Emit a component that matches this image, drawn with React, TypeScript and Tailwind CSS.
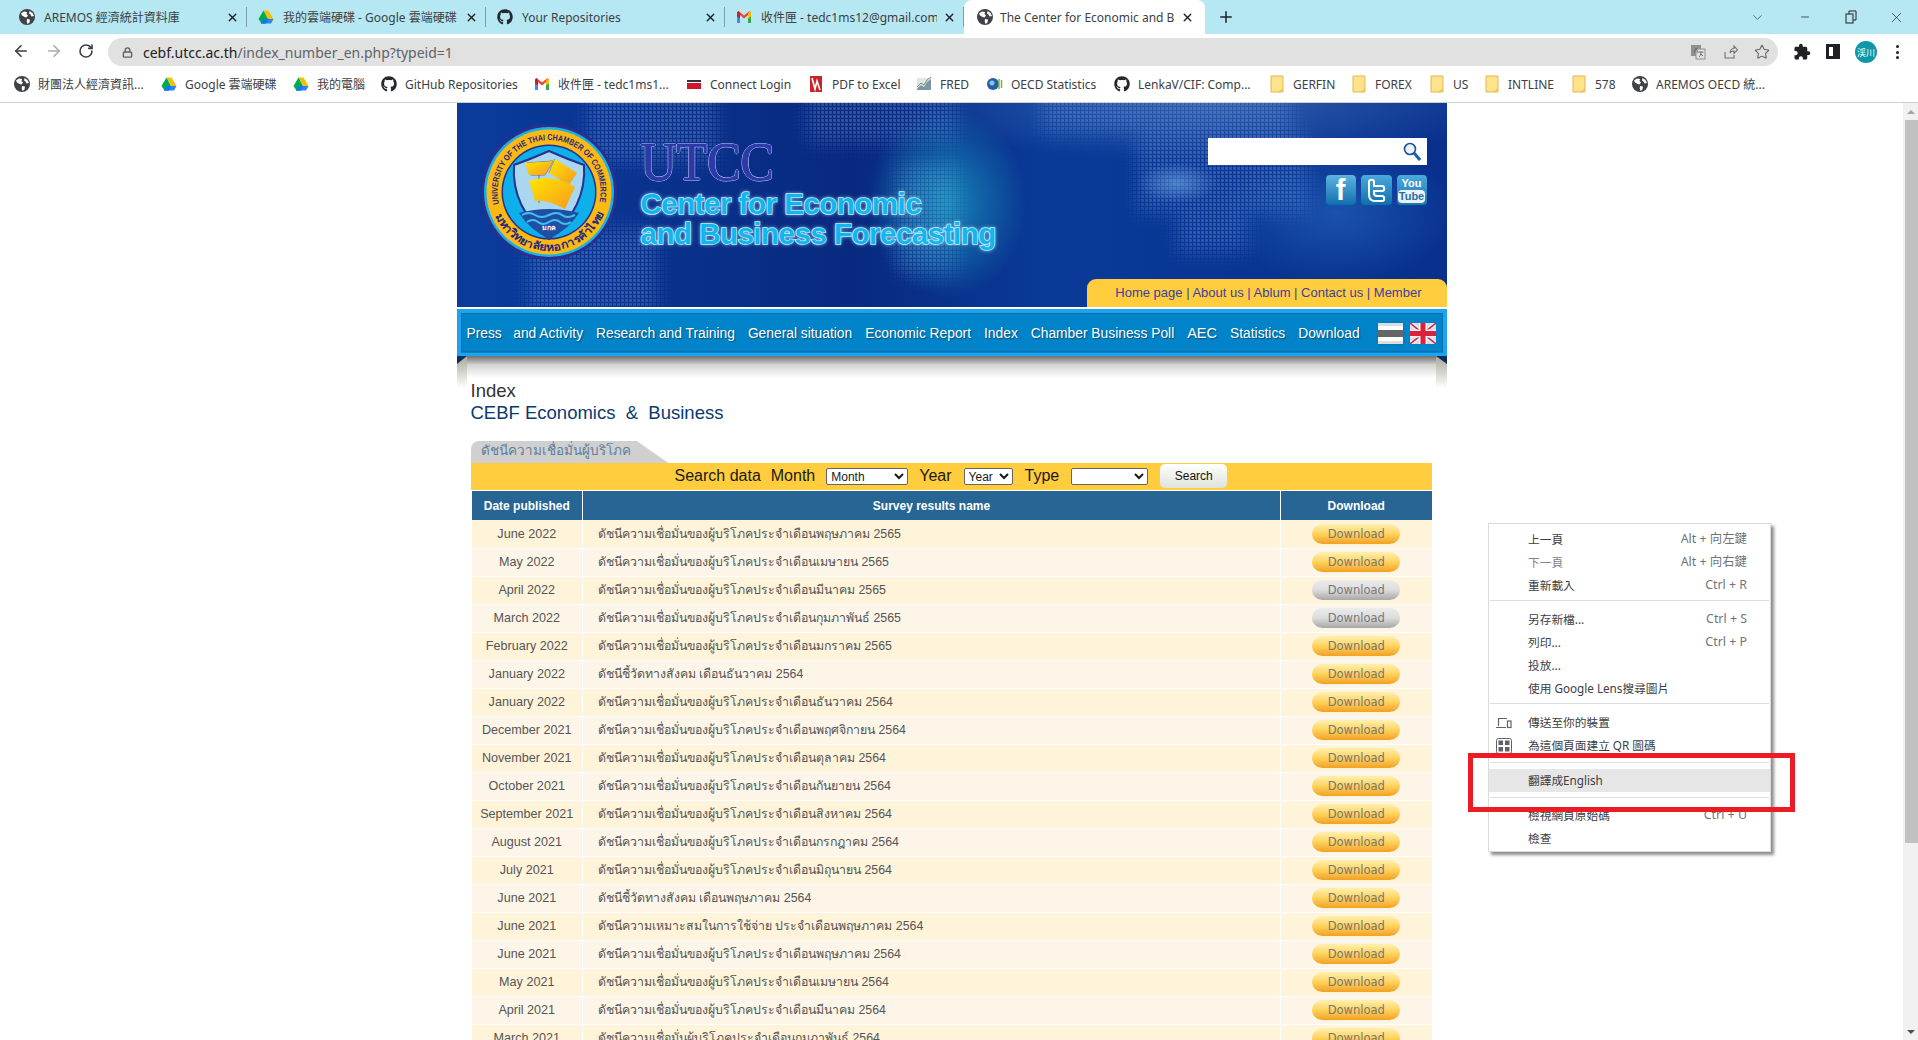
import type { ReactNode } from 'react';
import { ArrowLeft, ArrowRight, ChevronDown, Lock, Minus, Plus, RotateCw, Star, X } from 'lucide-react';
import { FaGithub } from 'react-icons/fa';
import { MdExtension } from 'react-icons/md';

const CHROME_FONT = "font-['Noto_Sans','Noto_Sans_CJK_TC',sans-serif]";

function Globe({ size = 16 }: { size?: number }) {
  return (
    <svg width={size} height={size} viewBox="0 0 16 16" className="shrink-0">
      <circle cx="8" cy="8" r="8" fill="#3f4347" />
      <path d="M2 4.5 5 2.5 8 3 7.5 5 9 6.5 7.5 8.5 5.5 8 3 6.5ZM8 10l3 .5-.5 3-2 1.5-.8-2.5ZM10.500 2l3 2 1.500 3-2.500.5-1-2-1.500-1Z" fill="#fff" />
    </svg>
  );
}

function Drive() {
  return (
    <svg width="16" height="16" viewBox="0 0 16 16" className="shrink-0">
      <path d="M5.500 1.500h5L15.500 10h-5Z" fill="#fbbc04" />
      <path d="M5.500 1.500 10 10l-2.500 4.500h-4L.5 10Z" fill="#00ac47" />
      <path d="M5.300 10h10.200l-2.500 4.500H2.800Z" fill="#2684fc" />
      <path d="M5.300 10h5.200l-2.500 4.500H2.800Z" fill="#1a73e8" />
    </svg>
  );
}

function Gmail() {
  return (
    <svg width="16" height="16" viewBox="0 0 16 16" className="shrink-0">
      <path d="M1 3.500V14h3V7.500Z" fill="#4285f4" />
      <path d="M15 3.500V14h-3V7.500Z" fill="#34a853" />
      <path d="M1 3.500 2.500 2 8 6.500 13.500 2 15 3.500 8 9.500Z" fill="#ea4335" />
      <path d="M12 4.500 13.500 2 15 3.500V7.500L12 9.500Z" fill="#fbbc04" />
      <path d="M1 3.500 2.500 2 4 4.200V9.500L1 7.500Z" fill="#c5221f" />
    </svg>
  );
}

function Github() {
  return <FaGithub size={16} className="shrink-0 text-[#24292e]" />;
}

function FolderIcon() {
  return (
    <svg width="14" height="18" viewBox="0 0 14 18" className="shrink-0">
      <path d="M1 1h12v16H1Z" fill="#ffe28c" stroke="#e0b94e" />
      <path d="M9 17l4-3" stroke="#e0b94e" fill="none" />
    </svg>
  );
}

function ConnectIcon() {
  return (
    <svg width="16" height="16" viewBox="0 0 16 16" className="shrink-0">
      <rect x="1" y="4" width="14" height="2" fill="#333" />
      <rect x="1" y="7" width="14" height="6" fill="#d2142b" />
    </svg>
  );
}

function PdfIcon() {
  return (
    <svg width="14" height="18" viewBox="0 0 14 18" className="shrink-0">
      <rect x="1" y="1" width="12" height="16" fill="#c8242b" />
      <path d="M3 3l3 11 2-8 3 9" stroke="#fff" strokeWidth="1.600" fill="none" />
    </svg>
  );
}

function FredIcon() {
  return (
    <svg width="16" height="16" viewBox="0 0 16 16" className="shrink-0">
      <rect x="1" y="2" width="14" height="12" fill="#dfe6ea" />
      <path d="M1 13 5 9l3 2 3-5 4-3v11H1Z" fill="#7d95a8" />
      <path d="M1 11l4-4 3 2 3-5 4-3" stroke="#6b9b4a" fill="none" />
    </svg>
  );
}

function OecdIcon() {
  return (
    <svg width="16" height="16" viewBox="0 0 16 16" className="shrink-0">
      <circle cx="6" cy="8" r="6" fill="#1f5fa8" />
      <circle cx="5" cy="7" r="2.500" fill="#8fc0e8" />
      <path d="M12 3v10M14.500 4v8" stroke="#7fb23e" strokeWidth="1.500" />
    </svg>
  );
}

const tabs = [
  { title: 'AREMOS 經濟統計資料庫', icon: <Globe /> },
  { title: '我的雲端硬碟 - Google 雲端硬碟', icon: <Drive /> },
  { title: 'Your Repositories', icon: <Github /> },
  { title: '收件匣 - tedc1ms12@gmail.com', icon: <Gmail /> },
];

const bookmarks = [
  { label: '財團法人經濟資訊...', icon: <Globe />, width: 'w-[107px]' },
  { label: 'Google 雲端硬碟', icon: <Drive />, width: 'w-[92px]' },
  { label: '我的電腦', icon: <Drive />, width: 'w-[48px]' },
  { label: 'GitHub Repositories', icon: <Github />, width: 'w-[113px]' },
  { label: '收件匣 - tedc1ms1...', icon: <Gmail />, width: 'w-[112px]' },
  { label: 'Connect Login', icon: <ConnectIcon />, width: 'w-[82px]' },
  { label: 'PDF to Excel', icon: <PdfIcon />, width: 'w-[68px]' },
  { label: 'FRED', icon: <FredIcon />, width: 'w-[31px]' },
  { label: 'OECD Statistics', icon: <OecdIcon />, width: 'w-[87px]' },
  { label: 'LenkaV/CIF: Comp...', icon: <Github />, width: 'w-[115px]' },
  { label: 'GERFIN', icon: <FolderIcon />, width: 'w-[42px]' },
  { label: 'FOREX', icon: <FolderIcon />, width: 'w-[38px]' },
  { label: 'US', icon: <FolderIcon />, width: 'w-[15px]' },
  { label: 'INTLINE', icon: <FolderIcon />, width: 'w-[47px]' },
  { label: '578', icon: <FolderIcon />, width: 'w-[21px]' },
  { label: 'AREMOS OECD 統...', icon: <Globe />, width: 'w-[114px]' },
];

function TabStrip() {
  return (
    <div className={`flex h-[34px] items-center bg-[#b6e8f3] pl-2 text-xs text-[#3c4043] ${CHROME_FONT}`}>
      {tabs.map((tab) => (
        <div key={tab.title} className="flex h-[34px] w-[239px] items-center pl-[11px]">
          {tab.icon}
          <span className="ml-[9px] w-[176px] overflow-hidden whitespace-nowrap pt-[2px]">{tab.title}</span>
          <X size={13} strokeWidth={2.5} className="ml-[6px] shrink-0 text-[#202124]" />
          <span className="ml-[7px] h-[20px] w-px shrink-0 bg-[#7f9ea5]" />
        </div>
      ))}
      <div className="flex h-[34px] w-[241px] items-center rounded-t-lg bg-white pl-[13px]">
        <Globe />
        <span className="ml-[7px] w-[174px] overflow-hidden whitespace-nowrap pt-[2px]">The Center for Economic and Business</span>
        <X size={13} strokeWidth={2.5} className="ml-[7px] shrink-0 text-[#202124]" />
      </div>
      <Plus size={18} strokeWidth={2} className="ml-[12px] text-[#202124]" />
      <ChevronDown size={15} strokeWidth={1.2} className="ml-[515px] text-[#3c4043]" />
      <Minus size={12} strokeWidth={1.5} className="ml-[34px] text-[#202124]" />
      <svg width="12" height="14" viewBox="0 0 12 14" className="ml-[34px]" fill="none" stroke="#202124">
        <rect x="1" y="4" width="7" height="9" />
        <path d="M4 4V1h7v9H8" />
      </svg>
      <X size={17} strokeWidth={1} className="ml-[31px] text-[#202124]" />
    </div>
  );
}

function Toolbar() {
  return (
    <div className={`flex h-[32px] items-start bg-white ${CHROME_FONT}`}>
      <ArrowLeft size={18} strokeWidth={2.2} className="ml-[12px] mt-[8px] text-[#3c4043]" />
      <ArrowRight size={18} strokeWidth={2.2} className="ml-[15px] mt-[8px] text-[#a9abae]" />
      <RotateCw size={16} strokeWidth={2.4} className="ml-[15px] mt-[9px] text-[#3c4043]" />
      <div className="ml-[14px] mt-1 flex h-7 w-[1670px] items-center rounded-full bg-[#e1e1e1] pl-[14px] text-[14px]">
        <Lock size={11} strokeWidth={3} className="text-[#5f6368]" />
        <span className="ml-[10px] whitespace-nowrap text-[#202124]">cebf.utcc.ac.th</span>
        <span className="whitespace-nowrap text-[#5f6368]">/index_number_en.php?typeid=1</span>
        <svg width="16" height="16" viewBox="0 0 16 16" className="ml-auto">
          <rect x="1" y="1" width="10" height="11" fill="#8d9093" />
          <rect x="6" y="5" width="9" height="10" fill="#e1e1e1" stroke="#8d9093" />
          <path d="M4 9l2-5 2 5M8.500 8h5M11 8c0 3-1 4-2 5M11 10l2 2" stroke="#6b6e71" fill="none" />
        </svg>
        <svg width="16" height="16" viewBox="0 0 16 16" className="ml-4" fill="none" stroke="#6f7275" strokeWidth="1.100">
          <path d="M3 8v6h9v-3M8 9c0-3 2-4.500 4-4.500V2l3.500 4L12 9.500V7C10 7 8.500 7.500 8 9Z" />
        </svg>
        <Star size={16} strokeWidth={1.6} className="ml-4 mr-2 text-[#5f6368]" />
      </div>
      <MdExtension size={18} className="ml-[15px] mt-[9px] text-[#202124]" />
      <span className="ml-[15px] mt-[10px] h-[15px] w-[14px] border-[3px] border-r-[7px] border-[#202124]" />
      <span className="ml-[15px] mt-[7px] flex h-[22px] w-[22px] items-center justify-center rounded-full bg-[#0d97a8] text-[9px] leading-none text-white">
        渓川
      </span>
      <span className="ml-[19px] mt-[11px] flex h-[14px] flex-col justify-between">
        <span className="h-[3px] w-[3px] rounded-full bg-[#202124]" />
        <span className="h-[3px] w-[3px] rounded-full bg-[#202124]" />
        <span className="h-[3px] w-[3px] rounded-full bg-[#202124]" />
      </span>
    </div>
  );
}

function BookmarkBar() {
  return (
    <div className={`flex h-[37px] items-center gap-4 border-b border-[#cfcfcf] bg-white pl-[14px] text-xs text-[#3c4043] ${CHROME_FONT}`}>
      {bookmarks.map((item) => (
        <div key={item.label} className="flex items-center">
          <span className="flex w-4 justify-center">{item.icon}</span>
          <span className={`ml-2 whitespace-nowrap pt-[2px] ${item.width}`}>{item.label}</span>
        </div>
      ))}
    </div>
  );
}

function Seal() {
  return (
    <svg width="136" height="138" viewBox="0 0 136 138" className="absolute left-[24px] top-[20px]">
      <defs>
        <path id="sealTop" d="M18 81A51.500 51.500 0 1 1 118 81" />
        <path id="sealBottom" d="M13 90A59 59 0 0 0 123 90" />
        <linearGradient id="sail" x1="0" x2="1" y1="0" y2="1">
          <stop offset="0" stopColor="#ffe600" />
          <stop offset="1" stopColor="#f79a1e" />
        </linearGradient>
      </defs>
      <circle cx="68" cy="69" r="68" fill="#2d2f8c" />
      <circle cx="68" cy="69" r="65" fill="#12b2ec" />
      <circle cx="68" cy="69" r="62.500" fill="#fdb913" />
      <circle cx="68" cy="69" r="47.500" fill="#2d2f8c" />
      <circle cx="68" cy="69" r="46" fill="#0db0ea" />
      <text fill="#27297f" fontSize="8.500" fontWeight="700" fontFamily="Liberation Sans, sans-serif">
        <textPath href="#sealTop" textLength="184" lengthAdjust="spacingAndGlyphs">UNIVERSITY OF THE THAI CHAMBER OF COMMERCE</textPath>
      </text>
      <text fill="#27297f" fontSize="11" fontWeight="700" fontFamily="Noto Sans, sans-serif">
        <textPath href="#sealBottom" textLength="138" lengthAdjust="spacingAndGlyphs" startOffset="2%">มหาวิทยาลัยหอการค้าไทย</textPath>
      </text>
      <path d="M33 42Q50 36 68 28 86 36 103 42 106 84 68 116 30 84 33 42Z" fill="#a9d7f0" stroke="#2d2f8c" strokeWidth="2" />
      <path d="M46 40 72 38 64 52 50 52M68 50 74 36M58 50v30M80 44v34" stroke="#5f6f9f" fill="none" />
      <path d="M44 40 72 38 64 52 48 52Z" fill="url(#sail)" />
      <path d="M68 50 74 36 96 50 88 62Z" fill="url(#sail)" />
      <path d="M48 58Q70 50 94 64L84 86Q66 76 54 78Z" fill="url(#sail)" />
      <path d="M38 90Q68 82 98 90 88 106 68 116 48 106 38 90Z" fill="#1f4ea3" />
      <path d="M41 92q7-4 13 0t14 0 13 0 13 0M46 99q6-4 11 0t11 0 11 0 11 0" stroke="#3ec2ef" strokeWidth="2" fill="none" />
      <text x="68" y="107" textAnchor="middle" fill="#fff" fontSize="7" fontWeight="700" fontFamily="Noto Sans, sans-serif">มกค</text>
    </svg>
  );
}

function WorldDots() {
  return (
    <svg width="990" height="204" className="absolute left-0 top-0">
      <defs>
        <pattern id="dots" width="4" height="4" patternUnits="userSpaceOnUse">
          <rect width="3" height="3" fill="#7fa6e2" fillOpacity="0.32" />
        </pattern>
        <filter id="soft">
          <feGaussianBlur stdDeviation="9" />
        </filter>
        <mask id="land">
          <g fill="#fff" filter="url(#soft)">
            <rect x="130" y="-10" width="130" height="70" />
            <rect x="70" y="125" width="130" height="85" />
            <rect x="350" y="-10" width="150" height="50" />
            <rect x="585" y="-10" width="250" height="40" />
            <rect x="680" y="30" width="170" height="80" />
            <rect x="720" y="110" width="70" height="40" />
            <rect x="440" y="60" width="60" height="110" />
          </g>
        </mask>
      </defs>
      <rect width="990" height="204" fill="url(#dots)" mask="url(#land)" />
    </svg>
  );
}

function Header() {
  return (
    <div className="relative h-[204px] overflow-hidden bg-[radial-gradient(ellipse_80px_95px_at_490px_100px,#1686b8,transparent),radial-gradient(ellipse_40px_20px_at_720px_80px,#4478c4,transparent),radial-gradient(ellipse_120px_70px_at_880px_110px,#1a52ad,transparent),radial-gradient(ellipse_300px_60px_at_750px_0px,#2f5eae,transparent),linear-gradient(90deg,#0a3b9c_0%,#08297f_40%,#0a3a98_60%,#08308c_100%)]">
      <WorldDots />
      <Seal />
      <div className="relative pl-[184px] pt-[31px]">
        <div className="origin-top scale-y-110 text-[50px] leading-[50px] text-[#2c3aa8] font-['Liberation_Serif',serif] [-webkit-text-stroke:1px_#2c3aa8] [text-shadow:1px_0_0_#c3cefa,-1px_0_0_#c3cefa,0_1px_0_#c3cefa,0_-1px_0_#c3cefa]">UTCC</div>
        <div className="mt-[5px] text-[29.500px] font-bold leading-[30px] tracking-[-0.5px] text-[#13b5ee] [-webkit-text-stroke:1.500px_#bfeeff] [paint-order:stroke_fill] [text-shadow:0_0_4px_#bfefff]">
          Center for Economic
          <br />
          and Business Forecasting
        </div>
      </div>
      <div className="absolute right-5 top-[35px] flex h-[27px] w-[219px] items-center justify-end bg-white pr-[6px]">
        <svg width="18" height="19" viewBox="0 0 18 19" fill="none">
          <circle cx="7" cy="7" r="5.500" stroke="#1e4f8c" strokeWidth="1.600" fill="#e8f4fc" />
          <path d="M11 11l6 7" stroke="#1763a8" strokeWidth="3" />
        </svg>
      </div>
      <div className="absolute right-5 top-[72px] flex gap-[5px]">
        <span className="flex h-[30px] w-[30px] items-center justify-center rounded bg-gradient-to-b from-[#5cb4e0] to-[#0b6fae] text-[29px] font-bold leading-[30px] text-white">f</span>
        <span className="flex h-[30px] w-[31px] items-center justify-center rounded bg-gradient-to-b from-[#4ba9dc] to-[#0b6fae]">
          <svg width="30" height="30" viewBox="0 0 30 30" fill="none" stroke="#fff" strokeWidth="2">
            <path d="M8 7c0-3 5-3 5 0v4h8c3 0 3 5 0 5h-8v2c0 2 1 3 3 3h5c3 0 3 5 0 5h-7c-4 0-6-3-6-7Z" />
          </svg>
        </span>
        <span className="flex h-[30px] w-[30px] flex-col items-center justify-center rounded bg-gradient-to-b from-[#4ba9dc] to-[#1a76b4] text-[11px] font-bold leading-[13px] text-white">
          <span>You</span>
          <span className="rounded-sm bg-white/90 px-px text-[#2a6ea5]">Tube</span>
        </span>
      </div>
      <div className="absolute bottom-0 right-0 flex h-7 w-[360px] items-center justify-end rounded-t-[9px] bg-[#ffcd3e] pr-[25px] text-[13px] text-[#3d3f9f]">
        Home page | About us | Ablum | Contact us | Member
      </div>
    </div>
  );
}

const navItems = ['Press   and Activity', 'Research and Training', 'General situation', 'Economic Report', 'Index', 'Chamber Business Poll', 'AEC', 'Statistics', 'Download'];

function Nav() {
  return (
    <div className="mt-[2px] flex h-[47px] items-center gap-[13px] border-[4px] border-b-[3px] border-[#1ea4ee] bg-[#0083c8] pl-[6px] text-[13.800px] text-white outline outline-[1px] -outline-offset-[5px] outline-[#0a6fb0] [text-shadow:1px_1px_1px_rgba(0,0,0,0.4)]">
      {navItems.map((item) => (
        <span key={item} className={`whitespace-pre pt-[2px] ${item === 'AEC' ? 'text-[14.500px]' : ''}`}>{item}</span>
      ))}
      <span className="ml-[5px] flex h-[21px] w-[25px] flex-col shadow-sm">
        <span className="h-[3px] bg-[#ddd]" />
        <span className="h-[4px] bg-white" />
        <span className="h-[7px] bg-[#666]" />
        <span className="h-[4px] bg-white" />
        <span className="h-[3px] bg-[#ddd]" />
      </span>
      <svg width="26" height="21" viewBox="0 0 26 21" className="-ml-[6px]">
        <rect width="26" height="21" fill="#d6d8e8" />
        <path d="M0 0 26 21M26 0 0 21" stroke="#e8e8f0" strokeWidth="5" />
        <path d="M0 0 26 21M26 0 0 21" stroke="#d8233f" strokeWidth="1.500" />
        <path d="M13 0v21M0 10.500h26" stroke="#f2f2f2" strokeWidth="8" />
        <path d="M13 0v21M0 10.500h26" stroke="#d8233f" strokeWidth="5" />
      </svg>
    </div>
  );
}

function NavShadow() {
  return (
    <div className="absolute inset-x-0 top-0 flex h-[32px]">
      <div className="relative w-[10px] bg-gradient-to-b from-[#a9a99c] to-white">
        <span className="absolute left-0 top-0 border-r-[10px] border-t-[8px] border-r-transparent border-t-[#0e2c5c]" />
      </div>
      <div className="h-[22px] flex-1 bg-gradient-to-b from-[#6f6f6f] via-[#d4d4d4] via-40% to-white" />
      <div className="relative w-[11px] bg-gradient-to-b from-[#a9a99c] to-white">
        <span className="absolute right-0 top-0 border-l-[11px] border-t-[8px] border-l-transparent border-t-[#0e2c5c]" />
      </div>
    </div>
  );
}

const THAI_BASE = 'ดัชนีความเชื่อมั่นของผู้บริโภคประจำเดือน';

const rows = [
  { date: 'June 2022', name: `${THAI_BASE}พฤษภาคม 2565` },
  { date: 'May 2022', name: `${THAI_BASE}เมษายน 2565` },
  { date: 'April 2022', name: `${THAI_BASE}มีนาคม 2565`, off: true },
  { date: 'March 2022', name: `${THAI_BASE}กุมภาพันธ์ 2565`, off: true },
  { date: 'February 2022', name: `${THAI_BASE}มกราคม 2565` },
  { date: 'January 2022', name: 'ดัชนีชี้วัดทางสังคม เดือนธันวาคม 2564' },
  { date: 'January 2022', name: `${THAI_BASE}ธันวาคม 2564` },
  { date: 'December 2021', name: `${THAI_BASE}พฤศจิกายน 2564` },
  { date: 'November 2021', name: `${THAI_BASE}ตุลาคม 2564` },
  { date: 'October 2021', name: `${THAI_BASE}กันยายน 2564` },
  { date: 'September 2021', name: `${THAI_BASE}สิงหาคม 2564` },
  { date: 'August 2021', name: `${THAI_BASE}กรกฎาคม 2564` },
  { date: 'July 2021', name: `${THAI_BASE}มิถุนายน 2564` },
  { date: 'June 2021', name: 'ดัชนีชี้วัดทางสังคม เดือนพฤษภาคม 2564' },
  { date: 'June 2021', name: 'ดัชนีความเหมาะสมในการใช้จ่าย ประจำเดือนพฤษภาคม 2564' },
  { date: 'June 2021', name: `${THAI_BASE}พฤษภาคม 2564` },
  { date: 'May 2021', name: `${THAI_BASE}เมษายน 2564` },
  { date: 'April 2021', name: `${THAI_BASE}มีนาคม 2564` },
  { date: 'March 2021', name: 'ดัชนีความเชื่อมั่นผู้บริโภคประจำเดือนกุมภาพันธ์ 2564' },
];

function SearchBar() {
  return (
    <div className="flex h-[27px] items-center bg-[#ffcd3e] pb-px pl-[204px] text-[16px] text-[#1a1a1a]">
      <span className="whitespace-pre">Search data</span>
      <span className="ml-[10px]">Month</span>
      <select defaultValue="Month" className="ml-[11px] h-[17px] w-[82px] rounded-[2px] border border-[#666] bg-white text-[12px]">
        <option>Month</option>
      </select>
      <span className="ml-[11px]">Year</span>
      <select defaultValue="Year" className="ml-[12px] h-[17px] w-[49px] rounded-[2px] border border-[#666] bg-white text-[12px]">
        <option>Year</option>
      </select>
      <span className="ml-[12px]">Type</span>
      <select className="ml-[12px] h-[17px] w-[77px] rounded-[2px] border border-[#666] bg-white text-[12px]">
        <option></option>
      </select>
      <button className="ml-[12px] h-6 w-[67px] rounded-[5px] bg-gradient-to-b from-white to-[#dfe3da] text-[12px] text-[#111]">Search</button>
    </div>
  );
}

function DataTable() {
  return (
    <table className="ml-px mt-px w-[960px] table-fixed border-collapse text-[#555]">
      <thead>
        <tr className="h-[29px] bg-[#266594] text-[12px] font-bold text-white">
          <th className="w-[111px] border-r border-white">Date published</th>
          <th className="w-[698px] border-r border-white">Survey results name</th>
          <th>Download</th>
        </tr>
      </thead>
      <tbody>
        {rows.map((row, index) => (
          <tr key={row.name} className={`h-[28px] border-b border-white ${index % 2 === 0 ? 'bg-[#fff3d9]' : 'bg-[#fdf5e7]'}`}>
            <td className="border-r border-white pt-px text-center text-[12.600px]">{row.date}</td>
            <td className="border-r border-white pl-[15px] pt-px text-[12.350px]">{row.name}</td>
            <td>
              <span
                className={`mx-auto block h-5 w-[88px] rounded-full text-center font-['DejaVu_Sans',sans-serif] text-[11.500px] leading-5 text-[#777] ${
                  row.off ? 'bg-gradient-to-b from-[#ececec] via-[#dcdcdc] to-[#a8a8a8]' : 'bg-gradient-to-b from-[#fff0b0] via-[#fdd35a] to-[#f2a021]'
                }`}
              >
                Download
              </span>
            </td>
          </tr>
        ))}
      </tbody>
    </table>
  );
}

function Scrollbar() {
  return (
    <div className="flex w-[15px] shrink-0 flex-col items-end bg-[#f1f1f1]">
      <div className="flex h-[17px] w-full items-center justify-center">
        <span className="border-x-[4px] border-b-[4px] border-x-transparent border-b-[#a3a3a3]" />
      </div>
      <div className="h-[723px] w-[13px] bg-[#c1c1c1]" />
      <div className="mt-auto flex h-[17px] w-full items-center justify-center">
        <span className="border-x-[4px] border-t-[4px] border-x-transparent border-t-[#505050]" />
      </div>
    </div>
  );
}

function MenuItem({ label, hint, muted, icon }: { label: string; hint?: string; muted?: boolean; icon?: ReactNode }) {
  return (
    <div className={`relative flex h-[23px] items-center justify-between pl-[39px] pr-[23px] ${muted ? 'text-[#80868b]' : 'text-[#3c4043]'}`}>
      {icon && <span className="absolute left-[7px]">{icon}</span>}
      <span>{label}</span>
      {hint && <span className="text-[12.400px] text-[#70757a]">{hint}</span>}
    </div>
  );
}

function MenuRule({ className }: { className: string }) {
  return <div className={`mx-px h-px bg-[#dcdcdc] ${className}`} />;
}

function ContextMenu() {
  return (
    <div className={`absolute left-[1488px] top-[523px] h-[329px] w-[283px] border border-[#dadada] bg-white pt-[4px] text-[11.700px] shadow-[3px_3px_3px_rgba(0,0,0,0.45)] ${CHROME_FONT}`}>
      <MenuItem label="上一頁" hint="Alt + 向左鍵" />
      <MenuItem label="下一頁" hint="Alt + 向右鍵" muted />
      <MenuItem label="重新載入" hint="Ctrl + R" />
      <MenuRule className="mb-[7px] mt-[3px]" />
      <MenuItem label="另存新檔..." hint="Ctrl + S" />
      <MenuItem label="列印..." hint="Ctrl + P" />
      <MenuItem label="投放..." />
      <MenuItem label="使用 Google Lens搜尋圖片" />
      <MenuRule className="mb-[7px] mt-[3px]" />
      <MenuItem
        label="傳送至你的裝置"
        icon={
          <svg width="16" height="12" viewBox="0 0 16 12" fill="none" stroke="#5f6368" strokeWidth="1.200">
            <path d="M2.500 9V1.500H11M0 10.500h10" />
            <rect x="11.500" y="4" width="3.500" height="6.500" />
          </svg>
        }
      />
      <MenuItem
        label="為這個頁面建立 QR 圖碼"
        icon={
          <svg width="16" height="16" viewBox="0 0 16 16">
            <rect x="0.500" y="0.500" width="15" height="15" rx="2" fill="none" stroke="#5f6368" />
            <rect x="2.500" y="2.500" width="4.500" height="4.500" fill="#5f6368" />
            <rect x="9" y="2.500" width="4.500" height="4.500" fill="#5f6368" />
            <rect x="2.500" y="9" width="4.500" height="4.500" fill="#5f6368" />
            <rect x="9" y="9" width="4.500" height="4.500" fill="#5f6368" />
          </svg>
        }
      />
      <MenuRule className="mb-[6px] mt-[5px]" />
      <div className="flex h-[23px] items-center bg-[#e6e6e6] pl-[39px] text-[#3c4043]">翻譯成English</div>
      <MenuRule className="mb-[6px] mt-[5px]" />
      <MenuItem label="檢視網頁原始碼" hint="Ctrl + U" />
      <MenuItem label="檢查" />
    </div>
  );
}

export default function App() {
  return (
    <div className="relative flex h-[1040px] flex-col overflow-hidden bg-white font-['Liberation_Sans',sans-serif]">
      <TabStrip />
      <Toolbar />
      <BookmarkBar />
      <div className="flex min-h-0 flex-1">
        <div className="min-w-0 flex-1 overflow-hidden">
          <div className="mx-auto w-[990px]">
            <Header />
            <Nav />
            <div className="relative">
              <NavShadow />
              <div className="relative ml-[14px] w-[961px] pt-6">
                <h1 className="text-[18.500px] leading-[22px] text-[#333]">Index</h1>
                <h2 className="whitespace-pre text-[18.500px] leading-[22px] text-[#0a3a6e]">CEBF Economics  &  Business</h2>
                <div className="mt-[17px] h-[22px] w-[198px] rounded-tl-lg bg-[#d0d0d0] pl-[10px] text-[13.500px] leading-[20px] text-[#5f7f9a] [clip-path:polygon(0_0,84%_0,100%_100%,0_100%)]">
                  ดัชนีความเชื่อมั่นผู้บริโภค
                </div>
                <SearchBar />
                <DataTable />
              </div>
            </div>
          </div>
        </div>
        <Scrollbar />
      </div>
      <ContextMenu />
      <div className="absolute left-[1468px] top-[753px] h-[59px] w-[327px] border-[5px] border-[#ed1c24]" />
    </div>
  );
}
